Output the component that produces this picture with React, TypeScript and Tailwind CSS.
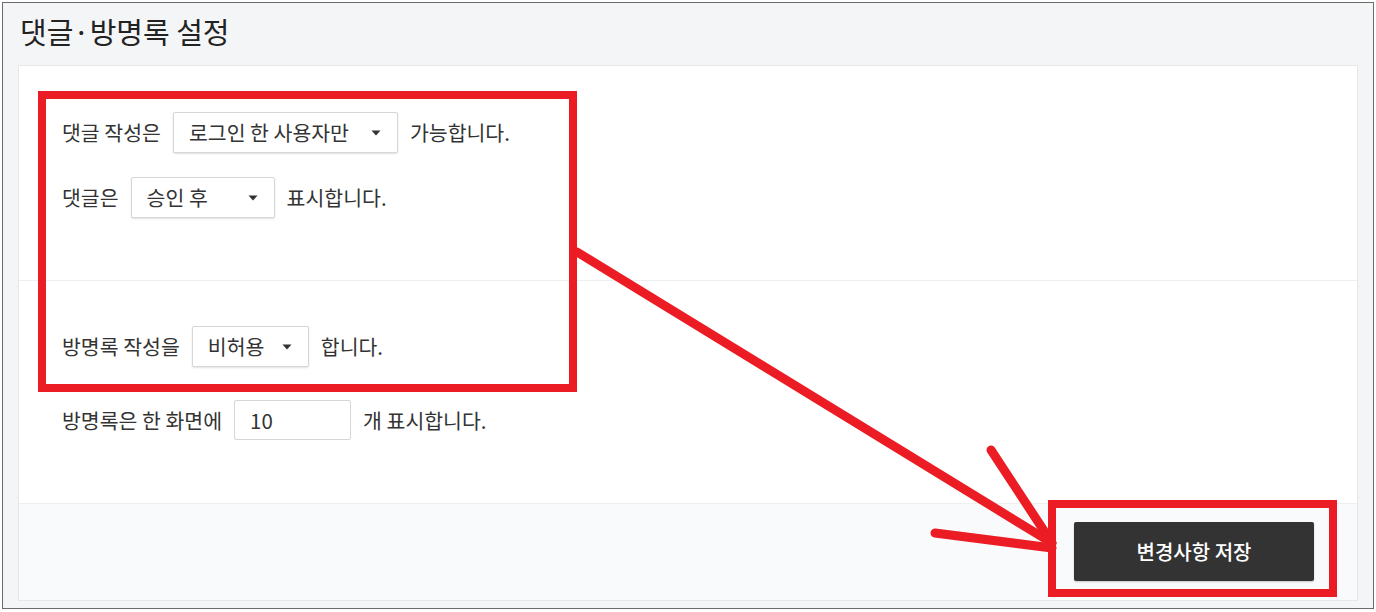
import React from "react";

const FONT = "font-['Noto_Sans_CJK_KR','Noto_Sans',sans-serif]";

function Caret() {
	return (
		<svg width="10" height="6" viewBox="0 0 10 6" className="shrink-0">
			<path d="M0.5 0.5h9L5 5.5z" fill="#333" />
		</svg>
	);
}

function SelectBox({ value, width }: { value: string; width: string }) {
	return (
		<div
			className={`flex h-[41px] ${width} items-center justify-between rounded-[2px] border border-[#d6d6d6] bg-white pl-[15px] pr-[16px] shadow-[0_1px_2px_rgba(0,0,0,0.12)]`}
		>
			<span>{value}</span>
			<Caret />
		</div>
	);
}

export default function App() {
	return (
		<div className={`relative h-[612px] w-[1376px] bg-white p-[2px] text-[20.5px] text-[#333] ${FONT}`}>
			<div className="flex h-[607px] flex-col border border-[#6b6b6b] bg-[#f4f5f7] px-[15px]">
				{/* Page title */}
				<h2 className="h-[62px] shrink-0 pl-[2px] pt-[7px] text-[29px] leading-[42px] font-normal text-[#222]">
					댓글·방명록 설정
				</h2>

				{/* Settings card */}
				<div className="flex flex-col border border-[#e6e7e9] bg-white">
					<div className="flex flex-col gap-[24px] border-b border-[#eeeff1] pb-[62px] pl-[43px] pt-[46px]">
						<div className="flex h-[41px] items-center gap-[12px]">
							<span>댓글 작성은</span>
							<SelectBox value="로그인 한 사용자만" width="w-[225px]" />
							<span>가능합니다.</span>
						</div>
						<div className="flex h-[41px] items-center gap-[12px]">
							<span>댓글은</span>
							<SelectBox value="승인 후" width="w-[144px]" />
							<span>표시합니다.</span>
						</div>
					</div>

					<div className="flex flex-col gap-[33px] pb-[63px] pl-[43px] pt-[45px]">
						<div className="flex h-[41px] items-center gap-[12px]">
							<span>방명록 작성을</span>
							<SelectBox value="비허용" width="w-[117px]" />
							<span>합니다.</span>
						</div>
						<div className="flex h-[40px] items-center gap-[12px]">
							<span>방명록은 한 화면에</span>
							<input
								defaultValue="10"
								className="h-[40px] w-[117px] rounded-[2px] border border-[#d6d6d6] bg-white pl-[15px] text-[20.5px] text-[#333] outline-none"
							/>
							<span>개 표시합니다.</span>
						</div>
					</div>

					<div className="flex justify-end border-t border-[#eeeff1] bg-[#f9fafb] pb-[19px] pr-[43px] pt-[18px]">
						<button className="h-[59px] w-[240px] rounded-[2px] bg-[#333] text-[20px] font-medium text-white shadow-[0_1px_2px_rgba(0,0,0,0.2)]">
							변경사항 저장
						</button>
					</div>
				</div>
			</div>

			{/* Red annotation overlay */}
			<svg
				className="pointer-events-none absolute inset-0"
				width="1376"
				height="612"
				viewBox="0 0 1376 612"
			>
				<g stroke="#ec1c24" fill="none">
					<rect x="42" y="95" width="531" height="293" strokeWidth="8" />
					<rect x="1052" y="504" width="281" height="89" strokeWidth="8" />
					<g strokeWidth="9" strokeLinecap="round">
						<line x1="577" y1="252" x2="1052" y2="543" />
						<line x1="991" y1="450" x2="1052" y2="543" />
						<line x1="935" y1="533" x2="1052" y2="548" />
					</g>
				</g>
			</svg>
		</div>
	);
}
